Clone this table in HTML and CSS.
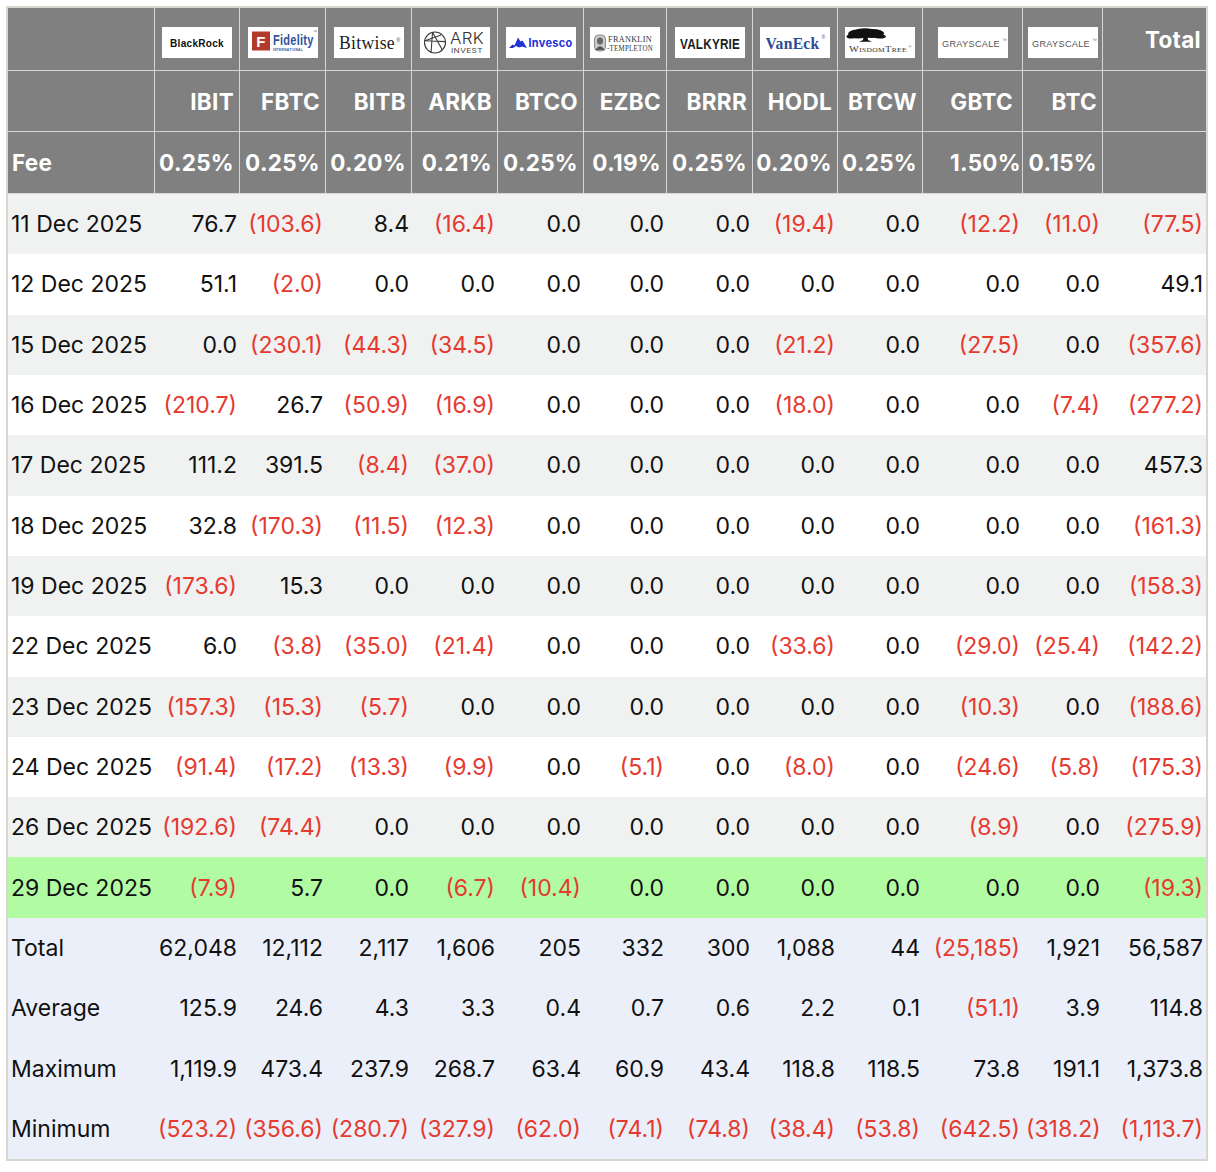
FILE: index.html
```html
<!DOCTYPE html>
<html lang="en">
<head>
<meta charset="utf-8">
<title>Bitcoin ETF Flows</title>
<link rel="stylesheet" href="styles.css">
</head>
<body>
<table class="flows">
<thead>
<tr class="r1">
<th class="w0"></th>
<th class="w1 lc"><svg class="logo" viewBox="0 0 70 31" width="70" height="31"><rect class="bg" width="70" height="31"/><text class="t-br" x="8" y="19.5" textLength="54" lengthAdjust="spacingAndGlyphs">BlackRock</text></svg></th>
<th class="w2 lc"><svg class="logo" viewBox="0 0 70 31" width="70" height="31"><rect class="bg" width="70" height="31"/><rect class="fid-sq" x="4" y="4.5" width="18" height="19"/><text class="t-fidf" x="13" y="19.5">F</text><text class="t-fid" transform="translate(25 18) scale(0.79 1)">Fidelity</text><text class="t-fidi" x="25" y="24" textLength="30" lengthAdjust="spacingAndGlyphs">INTERNATIONAL</text><text class="t-tm" x="65" y="6">™</text></svg></th>
<th class="w3 lc"><svg class="logo" viewBox="0 0 70 31" width="70" height="31"><rect class="bg" width="70" height="31"/><text class="t-bw" x="5" y="22" textLength="56" lengthAdjust="spacingAndGlyphs">Bitwise</text><text class="t-reg" x="62.5" y="15">®</text></svg></th>
<th class="w4 lc"><svg class="logo" viewBox="0 0 70 31" width="70" height="31"><rect class="bg" width="70" height="31"/><g class="ark-mark"><circle cx="15" cy="15.5" r="10.5"/><path d="M12.5 5.2 L11 25.8 M12.5 5.2 L22.5 23.3 M4.7 13.8 L25.4 14.6 M4.9 13.8 L21 8"/></g><text class="t-ark" x="30" y="16.5" textLength="34" lengthAdjust="spacingAndGlyphs">ARK</text><text class="t-arki" x="31" y="26" textLength="32" lengthAdjust="spacingAndGlyphs">INVEST</text></svg></th>
<th class="w5 lc"><svg class="logo" viewBox="0 0 70 31" width="70" height="31"><rect class="bg" width="70" height="31"/><path class="inv-mark" d="M3 21 L6.5 17.5 L8.5 18.5 L12 10.5 L14.5 14.5 L16.5 13.5 L21 21 L16 19.5 L13 20.5 L10 19 L7 21 Z"/><text class="t-inv" x="22.5" y="19.5" textLength="44" lengthAdjust="spacingAndGlyphs">Invesco</text></svg></th>
<th class="w6 lc"><svg class="logo" viewBox="0 0 70 31" width="70" height="31"><rect class="bg" width="70" height="31"/><rect class="ft-frame" x="4.5" y="8" width="11" height="16" rx="4"/><ellipse class="ft-head" cx="10" cy="14" rx="3" ry="3.6"/><path class="ft-body" d="M5.5 23 Q10 15.5 14.5 23 Z"/><text class="t-ft" x="18" y="15" textLength="44" lengthAdjust="spacingAndGlyphs">FRANKLIN</text><text class="t-ft" x="17" y="23.5" textLength="46" lengthAdjust="spacingAndGlyphs">-TEMPLETON</text></svg></th>
<th class="w7 lc"><svg class="logo" viewBox="0 0 70 31" width="70" height="31"><rect class="bg" width="70" height="31"/><text class="t-val" transform="translate(5 22) scale(0.78 1)">VALKYRIE</text></svg></th>
<th class="w8 lc"><svg class="logo" viewBox="0 0 70 31" width="70" height="31"><rect class="bg" width="70" height="31"/><text class="t-ve" x="5.5" y="22" textLength="54" lengthAdjust="spacingAndGlyphs">VanEck</text><text class="t-reg ve" x="61.5" y="12">®</text></svg></th>
<th class="w9 lc"><svg class="logo" viewBox="0 0 70 31" width="70" height="31"><rect class="bg" width="70" height="31"/><g class="wt-tree"><ellipse cx="13" cy="7" rx="10" ry="4.5"/><ellipse cx="27" cy="6.5" rx="12" ry="4.6"/><ellipse cx="20" cy="4.2" rx="10" ry="3"/><ellipse cx="6" cy="9.5" rx="4.5" ry="2"/><ellipse cx="35" cy="9.5" rx="6" ry="2"/><path d="M18.5 9 L22.5 9 L23 13 L27 14.8 L14 14.8 L18 13 Z"/></g><text class="t-wt" x="4" y="25" textLength="58" lengthAdjust="spacingAndGlyphs"><tspan class="wt-big">W</tspan>ISDOM<tspan class="wt-big">T</tspan>REE</text><text class="t-tm" x="63.5" y="21">®</text></svg></th>
<th class="w10 lc"><svg class="logo" viewBox="0 0 70 31" width="70" height="31"><rect class="bg" width="70" height="31"/><text class="t-gs" x="4" y="19.5" textLength="58" lengthAdjust="spacingAndGlyphs">GRAYSCALE</text><text class="t-tm gs" x="64" y="14.5">™</text></svg></th>
<th class="w11 lc"><svg class="logo" viewBox="0 0 70 31" width="70" height="31"><rect class="bg" width="70" height="31"/><text class="t-gs" x="4" y="19.5" textLength="58" lengthAdjust="spacingAndGlyphs">GRAYSCALE</text><text class="t-tm gs" x="64" y="14.5">™</text></svg></th>
<th class="w12 last">Total</th>
</tr>
<tr class="r2">
<th></th><th>IBIT</th><th>FBTC</th><th>BITB</th><th>ARKB</th><th>BTCO</th><th>EZBC</th><th>BRRR</th><th>HODL</th><th>BTCW</th><th class="gb-t">GBTC</th><th>BTC</th><th class="last"></th>
</tr>
<tr class="r3">
<th class="lbl">Fee</th><th>0.25%</th><th>0.25%</th><th>0.20%</th><th>0.21%</th><th>0.25%</th><th>0.19%</th><th>0.25%</th><th>0.20%</th><th>0.25%</th><th class="gb-f">1.50%</th><th>0.15%</th><th class="last"></th>
</tr>
</thead>
<tbody>
<tr class="alt"><td>11 Dec 2025</td><td>76.7</td><td class="n">(103.6)</td><td>8.4</td><td class="n">(16.4)</td><td>0.0</td><td>0.0</td><td>0.0</td><td class="n">(19.4)</td><td>0.0</td><td class="n">(12.2)</td><td class="n">(11.0)</td><td class="n">(77.5)</td></tr>
<tr><td>12 Dec 2025</td><td>51.1</td><td class="n">(2.0)</td><td>0.0</td><td>0.0</td><td>0.0</td><td>0.0</td><td>0.0</td><td>0.0</td><td>0.0</td><td>0.0</td><td>0.0</td><td>49.1</td></tr>
<tr class="alt"><td>15 Dec 2025</td><td>0.0</td><td class="n">(230.1)</td><td class="n">(44.3)</td><td class="n">(34.5)</td><td>0.0</td><td>0.0</td><td>0.0</td><td class="n">(21.2)</td><td>0.0</td><td class="n">(27.5)</td><td>0.0</td><td class="n">(357.6)</td></tr>
<tr><td>16 Dec 2025</td><td class="n">(210.7)</td><td>26.7</td><td class="n">(50.9)</td><td class="n">(16.9)</td><td>0.0</td><td>0.0</td><td>0.0</td><td class="n">(18.0)</td><td>0.0</td><td>0.0</td><td class="n">(7.4)</td><td class="n">(277.2)</td></tr>
<tr class="alt"><td>17 Dec 2025</td><td>111.2</td><td>391.5</td><td class="n">(8.4)</td><td class="n">(37.0)</td><td>0.0</td><td>0.0</td><td>0.0</td><td>0.0</td><td>0.0</td><td>0.0</td><td>0.0</td><td>457.3</td></tr>
<tr><td>18 Dec 2025</td><td>32.8</td><td class="n">(170.3)</td><td class="n">(11.5)</td><td class="n">(12.3)</td><td>0.0</td><td>0.0</td><td>0.0</td><td>0.0</td><td>0.0</td><td>0.0</td><td>0.0</td><td class="n">(161.3)</td></tr>
<tr class="alt"><td>19 Dec 2025</td><td class="n">(173.6)</td><td>15.3</td><td>0.0</td><td>0.0</td><td>0.0</td><td>0.0</td><td>0.0</td><td>0.0</td><td>0.0</td><td>0.0</td><td>0.0</td><td class="n">(158.3)</td></tr>
<tr><td>22 Dec 2025</td><td>6.0</td><td class="n">(3.8)</td><td class="n">(35.0)</td><td class="n">(21.4)</td><td>0.0</td><td>0.0</td><td>0.0</td><td class="n">(33.6)</td><td>0.0</td><td class="n">(29.0)</td><td class="n">(25.4)</td><td class="n">(142.2)</td></tr>
<tr class="alt"><td>23 Dec 2025</td><td class="n">(157.3)</td><td class="n">(15.3)</td><td class="n">(5.7)</td><td>0.0</td><td>0.0</td><td>0.0</td><td>0.0</td><td>0.0</td><td>0.0</td><td class="n">(10.3)</td><td>0.0</td><td class="n">(188.6)</td></tr>
<tr><td>24 Dec 2025</td><td class="n">(91.4)</td><td class="n">(17.2)</td><td class="n">(13.3)</td><td class="n">(9.9)</td><td>0.0</td><td class="n">(5.1)</td><td>0.0</td><td class="n">(8.0)</td><td>0.0</td><td class="n">(24.6)</td><td class="n">(5.8)</td><td class="n">(175.3)</td></tr>
<tr class="alt"><td>26 Dec 2025</td><td class="n">(192.6)</td><td class="n">(74.4)</td><td>0.0</td><td>0.0</td><td>0.0</td><td>0.0</td><td>0.0</td><td>0.0</td><td>0.0</td><td class="n">(8.9)</td><td>0.0</td><td class="n">(275.9)</td></tr>
<tr class="today"><td>29 Dec 2025</td><td class="n">(7.9)</td><td>5.7</td><td>0.0</td><td class="n">(6.7)</td><td class="n">(10.4)</td><td>0.0</td><td>0.0</td><td>0.0</td><td>0.0</td><td>0.0</td><td>0.0</td><td class="n">(19.3)</td></tr>
</tbody>
<tfoot>
<tr><td>Total</td><td>62,048</td><td>12,112</td><td>2,117</td><td>1,606</td><td>205</td><td>332</td><td>300</td><td>1,088</td><td>44</td><td class="n">(25,185)</td><td>1,921</td><td>56,587</td></tr>
<tr><td>Average</td><td>125.9</td><td>24.6</td><td>4.3</td><td>3.3</td><td>0.4</td><td>0.7</td><td>0.6</td><td>2.2</td><td>0.1</td><td class="n">(51.1)</td><td>3.9</td><td>114.8</td></tr>
<tr><td>Maximum</td><td>1,119.9</td><td>473.4</td><td>237.9</td><td>268.7</td><td>63.4</td><td>60.9</td><td>43.4</td><td>118.8</td><td>118.5</td><td>73.8</td><td>191.1</td><td>1,373.8</td></tr>
<tr><td>Minimum</td><td class="n">(523.2)</td><td class="n">(356.6)</td><td class="n">(280.7)</td><td class="n">(327.9)</td><td class="n">(62.0)</td><td class="n">(74.1)</td><td class="n">(74.8)</td><td class="n">(38.4)</td><td class="n">(53.8)</td><td class="n">(642.5)</td><td class="n">(318.2)</td><td class="n">(1,113.7)</td></tr>
</tfoot>
</table>
</body>
</html>
```
FILE: styles.css
```css
html, body {
  margin: 0;
  background: #ffffff;
}
body {
  padding: 6px;
  font-family: Inter, "Noto Sans", "Liberation Sans", sans-serif;
  font-size: 23px;
  color: #111111;
}
.flows {
  border: 2px solid #d9d6ce;
  border-collapse: separate;
  border-spacing: 0;
  table-layout: fixed;
  width: 1202px;
  box-sizing: border-box;
}
.flows th,
.flows td {
  box-sizing: border-box;
  padding: 0 3px;
  white-space: nowrap;
  text-align: right;
  vertical-align: middle;
}
.w0 { width: 147px; }
.w1 { width: 85px; }
.w2, .w3, .w4, .w5, .w7 { width: 86px; }
.w6 { width: 83px; }
.w8, .w9 { width: 85px; }
.w10 { width: 100px; }
.w11 { width: 80px; }
.w12 { width: 103px; }

.flows thead th {
  background: #808080;
  color: #ffffff;
  font-weight: 700;
  font-size: 22.5px;
  letter-spacing: 0.3px;
  border-right: 1px solid #d6d6d6;
  border-bottom: 1px solid #d6d6d6;
  padding: 0 5px 0 3px;
}
.flows thead th.last { border-right: 0; }
.flows thead th.lbl { text-align: left; padding-left: 4px; }
.flows thead th.lc { text-align: center; padding: 6px 0 0 0; }
.flows thead th.gb-t { padding-right: 9px; }
.flows thead th.gb-f { padding-right: 1px; }
.r1 th { height: 63px; padding-top: 6px; }
.r2 th { height: 61px; }
.r3 th { height: 62px; }

.flows tbody td,
.flows tfoot td {
  height: 60.3125px;
  background: #ffffff;
}
.flows tbody tr.alt td { background: #f0f1f1; }
.flows tbody tr.today td { background: #b1fba3; }
.flows tfoot td { background: #ebeff9; }
.flows td:first-child { text-align: left; padding-left: 3px; }
.flows td.n { color: #e53a2f; }

/* logos */
.logo { display: block; margin: 0 auto; }
.logo .bg { fill: #ffffff; }
.t-br { font: 700 10.6px "Liberation Sans", Arial, sans-serif; fill: #111; }
.fid-sq { fill: #b23a2c; }
.t-fidf { font: 700 15px "Liberation Sans", sans-serif; fill: #fff; text-anchor: middle; }
.t-fid { font: 700 14px "Liberation Sans", sans-serif; fill: #35539b; }
.t-fidi { font: 700 3.5px "Liberation Sans", sans-serif; fill: #35539b; }
.t-tm { font: 400 4px "Liberation Sans", sans-serif; fill: #555; }
.t-tm.gs { font-size: 5px; fill: #777; }
.t-bw { font: 400 18.5px "Liberation Serif", "DejaVu Serif", serif; fill: #1d1d1d; }
.t-reg { font: 400 5px "Liberation Sans", sans-serif; fill: #333; }
.t-reg.ve { fill: #2c4c92; }
.ark-mark { fill: none; stroke: #3a3a3a; stroke-width: 1.1; }
.t-ark { font: 300 16px Inter, "Liberation Sans", sans-serif; fill: #333; }
.t-arki { font: 400 6.5px Inter, "Liberation Sans", sans-serif; fill: #444; }
.inv-mark { fill: #1f33d6; }
.t-inv { font: 700 11.4px Inter, "Liberation Sans", sans-serif; fill: #1f33d6; }
.ft-frame { fill: #c9c9c9; stroke: #777; stroke-width: 0.8; }
.ft-head { fill: #666; }
.ft-body { fill: #555; }
.t-ft { font: 400 7.5px "Liberation Serif", serif; fill: #333; }
.t-val { font: 700 15px "Liberation Sans", sans-serif; fill: #1c1c1c; }
.t-ve { font: 700 16px "Liberation Serif", serif; fill: #2c4c92; }
.wt-tree { fill: #111; }
.t-wt { font: 400 6.5px "Liberation Serif", serif; fill: #333; }
.wt-big { font-size: 9px; }
.t-gs { font: 400 9.5px "Liberation Sans", sans-serif; fill: #555; }
```
